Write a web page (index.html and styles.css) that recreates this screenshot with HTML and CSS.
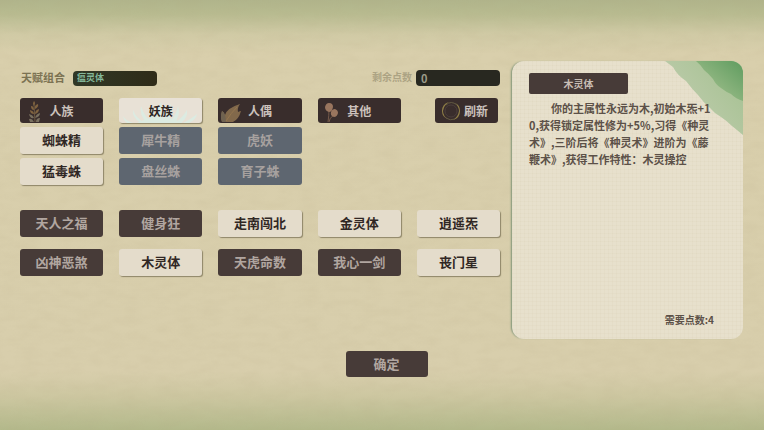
FILE: index.html
```html
<!DOCTYPE html>
<html lang="zh-CN">
<head>
    <meta charset="UTF-8">
    <meta name="viewport" content="width=device-width, initial-scale=1.0">
    <title>天赋选择</title>
    <link rel="stylesheet" href="styles.css">
</head>
<body>
    <!-- 纸张纹理 -->
    <svg class="paper" aria-hidden="true">
        <filter id="fiber">
            <feTurbulence type="fractalNoise" baseFrequency="0.05 0.12" numOctaves="3" seed="4"/>
            <feColorMatrix values="0 0 0 0 0.45  0 0 0 0 0.38  0 0 0 0 0.22  0.9 0 0 0 -0.3"/>
        </filter>
        <rect width="100%" height="100%" filter="url(#fiber)"/>
    </svg>

    <main class="screen">
        <section class="talents">
            <!-- 顶部信息 -->
            <div class="status">
                <div class="field">
                    <label for="combo">天赋组合</label>
                    <input id="combo" class="combo" type="text" value="瘟灵体" readonly>
                </div>
                <div class="field points">
                    <label for="left">剩余点数</label>
                    <input id="left" type="text" value="0" readonly>
                </div>
            </div>

            <!-- 种族分类 -->
            <div class="grid tabs">
                <button type="button" class="tab">
                    <svg class="icon" viewBox="0 0 83 25" aria-hidden="true">
                        <g fill="#80633f">
                            <path d="M14 3q2 2 0 5q-2-2 0-5zM11 8q3 0 3 4q-3 0-3-4zM18 6q1 3-3 5q-1-4 3-5zM10 12q4 1 4 4q-4 0-4-4zM19 11q0 4-4 5q0-4 4-5z"/>
                            <path fill="#79705f" d="M9 16q4 1 5 4q-4 1-5-4zM20 15q0 4-5 5q1-4 5-5zM9 21q3-1 5 3h-4zM20 20q-4 0-4 4h3z"/>
                        </g>
                        <path d="M14 6l1 18" stroke="#6d5a42" fill="none"/>
                    </svg>
                    人族
                </button>
                <button type="button" class="tab active">
                    <svg class="icon" viewBox="0 0 83 25" aria-hidden="true">
                        <g fill="#dcebe2">
                            <path d="M22 25q-9-5-8-13q3 8 12 13zM28 25q-8-8-6-17q3 10 11 17zM34 25q-6-10-2-19q1 11 6 19zM38 25q-3-12 4-21q3 10 1 21zM44 25q1-11 8-19q2 11-4 19zM50 25q7-7 9-17q3 10-4 17zM56 25q8-6 12-13q1 8-6 13zM64 25q8-4 14-9q-1 6-8 9zM14 25q-7-2-10-7q1 5 4 7z"/>
                            <path d="M18 25q22-12 46 0z"/>
                        </g>
                    </svg>
                    妖族
                </button>
                <button type="button" class="tab">
                    <svg class="icon" viewBox="0 0 83 25" aria-hidden="true">
                        <path fill="#82694b" d="M4 24q-2-5 0-11q2 1 3 4q2-7 15-11q-3 4-2 8q2-1 3-1q-2 8-8 11z"/>
                        <path fill="#6f6250" d="M4 24q-2-5 0-11q2 1 3 4q1 4 1 7z"/>
                        <path d="M8 23Q13 15 19 9" stroke="#94764f" fill="none"/>
                    </svg>
                    人偶
                </button>
                <button type="button" class="tab">
                    <svg class="icon" viewBox="0 0 83 25" aria-hidden="true">
                        <path d="M11 11q0 7-1 13M16 17q-5 3-5 7" stroke="#765a4a" fill="none"/>
                        <path fill="#99755e" d="M11 5q4 0 4 4q-1 5-4 5q-4-1-4-5q1-4 4-4zM17 11q3 1 3 4q-1 4-4 4q-4-1-3-5q1-3 4-3z"/>
                    </svg>
                    其他
                </button>
                <button type="button" class="tab refresh">
                    <svg class="ring" viewBox="0 0 20 20" aria-hidden="true">
                        <circle cx="10" cy="10" r="6" fill="none" stroke="#4b3e3c"/>
                        <path d="M8 1Q1 3 1 10Q1 16 7 18Q2 15 2 10Q3 4 8 1zM12 19Q19 17 19 10Q19 4 14 2Q18 6 18 10Q17 16 12 19z" fill="#918047"/>
                        <path d="M5 4Q10-1 16 4M5 17q4 3 9 1" fill="none" stroke="#625942"/>
                    </svg>
                    刷新
                </button>
            </div>

            <!-- 种族 -->
            <div class="grid races">
                <button type="button" class="card">蜘蛛精</button>
                <button type="button" class="card locked">犀牛精</button>
                <button type="button" class="card locked">虎妖</button>
                <button type="button" class="card first">猛毒蛛</button>
                <button type="button" class="card locked">盘丝蛛</button>
                <button type="button" class="card locked">育子蛛</button>
            </div>

            <!-- 天赋 -->
            <div class="grid traits">
                <button type="button" class="card dark">天人之福</button>
                <button type="button" class="card dark">健身狂</button>
                <button type="button" class="card">走南闯北</button>
                <button type="button" class="card">金灵体</button>
                <button type="button" class="card">逍遥炁</button>
                <button type="button" class="card dark">凶神恶煞</button>
                <button type="button" class="card">木灵体</button>
                <button type="button" class="card dark">天虎命数</button>
                <button type="button" class="card dark">我心一剑</button>
                <button type="button" class="card">丧门星</button>
            </div>
        </section>

        <!-- 右侧详情 -->
        <aside class="detail">
            <svg class="ink" viewBox="0 0 78 74" aria-hidden="true">
                <defs>
                    <linearGradient id="pale" x1="1" y1="0" x2="0.2" y2="0.6">
                        <stop offset="0" stop-color="#a3c08f"/>
                        <stop offset="1" stop-color="#bccbaa"/>
                    </linearGradient>
                    <linearGradient id="wash" x1="1" y1="0" x2="0.3" y2="0.7">
                        <stop offset="0" stop-color="#5f9c5f"/>
                        <stop offset="1" stop-color="#97ba86"/>
                    </linearGradient>
                </defs>
                <path fill="url(#pale)" d="M0 0H78V74Q72 69 67 65Q62 60 56 56Q50 53 45 47Q38 41 33 34Q27 28 21 20Q12 14 8 6z"/>
                <path fill="url(#wash)" d="M31 0H78V40Q71 38 66 33Q61 31 56 27Q51 24 48 18Q44 13 39 9Q36 4 31 0z"/>
            </svg>
            <h2>木灵体</h2>
            <p class="desc">你的主属性永远为木,初始木炁+10,获得锁定属性修为+5%,习得《种灵术》,三阶后将《种灵术》进阶为《藤鞭术》,获得工作特性：木灵操控</p>
            <p class="cost">需要点数:4</p>
        </aside>
    </main>

    <footer class="footer">
        <button type="button" class="card dark confirm">确定</button>
    </footer>
</body>
</html>
```

FILE: styles.css
```css
* {
    box-sizing: border-box;
}

body {
    margin: 0;
    min-height: 100vh;
    padding: 61px 21px 20px 20px;
    position: relative;
    font-family: "Noto Sans CJK SC", sans-serif;
    font-weight: 700;
    color: #5c5148;
    background: linear-gradient(#b0b48b 0, #b8bb90 14px, #d0caa5 34px, #d9cfac 54px, #d8ceac calc(100% - 58px), #cdc7a1 calc(100% - 34px), #b3b98b 100%);
}

button,
input {
    font: inherit;
    border: 0;
    padding: 0;
}

button {
    cursor: pointer;
}

/* 纸张纹理 */
.paper {
    position: absolute;
    inset: 0;
    width: 100%;
    height: 100%;
    opacity: 0.2;
    z-index: -1;
}

.screen {
    display: grid;
    grid-template-columns: 480fr 231fr;
    gap: 12px;
}

.talents {
    padding-top: 9px;
}

/* 顶部信息 */
.status,
.field {
    display: flex;
    align-items: center;
    justify-content: space-between;
}

.status {
    height: 16px;
    margin-bottom: 12px;
}

.field {
    gap: 8px;
    font-size: 11px;
    line-height: 14px;
    color: #7b7252;
    padding-left: 1px;
}

.field label {
    padding-bottom: 2px;
}

.field input {
    width: 84px;
    height: 16px;
    padding: 0 5px 1px;
    border-radius: 4px;
    background: #282820;
    color: #9b9a88;
}

.field .combo {
    height: 15px;
    padding: 0 4px 1px;
    font-size: 9px;
    color: #83b79a;
    background: linear-gradient(90deg, #303827, #2f2b18);
}

.points {
    gap: 4px;
    color: #aca383;
}

.points label {
    font-size: 10px;
}

/* 按钮网格 */
.grid {
    display: grid;
    grid-template-columns: repeat(5, 1fr);
    gap: 4px 16px;
}

.tab {
    position: relative;
    height: 25px;
    border-radius: 3px;
    background: #392d2c;
    color: #cbc1bc;
    font-size: 12px;
    line-height: 25px;
}

.tab.active {
    background: #e8e1d6;
    color: #2d2522;
    box-shadow: 1px 1px 1px #8e8568;
    z-index: 0;
}

.icon {
    position: absolute;
    left: 0;
    top: 0;
    height: 25px;
    z-index: -1;
}

.tab:not(.active) .icon {
    z-index: auto;
}

.refresh {
    display: flex;
    align-items: center;
    justify-content: center;
    gap: 3px;
    width: 63px;
    justify-self: end;
    margin-right: 2px;
    padding-right: 4px;
}

.ring {
    width: 20px;
    height: 20px;
}

.races {
    margin-top: 4px;
}

.card {
    height: 27px;
    padding-bottom: 2px;
    border-radius: 3px;
    background: #e4dccb;
    color: #302724;
    font-size: 13px;
    line-height: 25px;
    box-shadow: 1px 1px 1px #8e8568;
}

.card.first {
    grid-column: 1;
}

.card.locked {
    background: #5e6670;
    color: #a7a19f;
    box-shadow: none;
}

.card.dark {
    background: #473b38;
    color: #b1a6a0;
    box-shadow: none;
}

.traits {
    margin-top: 25px;
    row-gap: 12px;
}

/* 详情卡片 */
.detail {
    position: relative;
    display: flex;
    flex-direction: column;
    min-height: 278px;
    padding: 12px 27px 11px 17px;
    border-radius: 12px;
    background:
        repeating-linear-gradient(90deg, rgba(190, 175, 135, 0.06) 0 1px, transparent 1px 4px),
        repeating-linear-gradient(rgba(190, 175, 135, 0.06) 0 1px, transparent 1px 4px),
        #e7e0cc;
    box-shadow: -2px 0 2px -1px #7e9478;
}

.ink {
    position: absolute;
    top: 0;
    right: 0;
    width: 78px;
    border-top-right-radius: 12px;
}

.detail h2 {
    position: relative;
    width: 99px;
    margin: 0 0 6px;
    border-radius: 2px;
    background: #473b38;
    color: #c9beb5;
    font-size: 10px;
    line-height: 21px;
    text-align: center;
}

.desc {
    position: relative;
    margin: 0;
    font-size: 11px;
    line-height: 17px;
    text-indent: 2em;
    word-break: break-all;
}

.cost {
    margin: auto 2px 0 0;
    font-size: 10px;
    line-height: 17px;
    text-align: right;
}

/* 底部确认 */
.footer {
    display: flex;
    justify-content: center;
    padding: 12px 0 0 10px;
}

.confirm {
    height: 26px;
    width: 82px;
}
```
